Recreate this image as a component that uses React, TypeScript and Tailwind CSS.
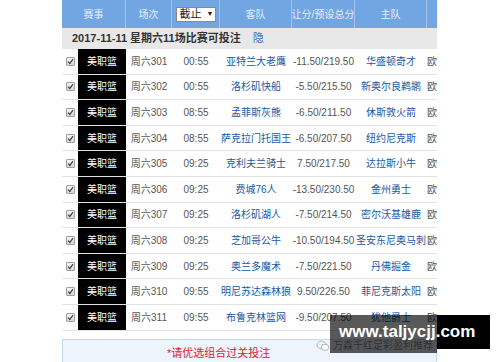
import React from "react";

const rows = [
  ["301", "00:55", "亚特兰大老鹰", "-11.50/219.50", "华盛顿奇才"],
  ["302", "00:55", "洛杉矶快船", "-5.50/215.50", "新奥尔良鹈鹕"],
  ["303", "08:55", "孟菲斯灰熊", "-6.50/211.50", "休斯敦火箭"],
  ["304", "08:55", "萨克拉门托国王", "-6.50/207.50", "纽约尼克斯"],
  ["305", "09:25", "克利夫兰骑士", "7.50/217.50", "达拉斯小牛"],
  ["306", "09:25", "费城76人", "-13.50/230.50", "金州勇士"],
  ["307", "09:25", "洛杉矶湖人", "-7.50/214.50", "密尔沃基雄鹿"],
  ["308", "09:25", "芝加哥公牛", "-10.50/194.50", "圣安东尼奥马刺"],
  ["309", "09:25", "奥兰多魔术", "-7.50/221.50", "丹佛掘金"],
  ["310", "09:55", "明尼苏达森林狼", "9.50/226.50", "菲尼克斯太阳"],
  ["311", "09:55", "布鲁克林篮网", "-9.50/207.50", "犹他爵士"],
];

const font = { fontFamily: '"Liberation Sans","Noto Sans CJK SC",sans-serif' };

function Check() {
  return (
    <span className="flex h-[9px] w-[9px] items-center justify-center rounded-[1px] border border-[#a0a0a0] bg-gradient-to-b from-[#f4f4f4] to-[#d8d8d8]">
      <svg width="7" height="7" viewBox="0 0 7 7">
        <path d="M1 3.6 L2.8 5.4 L6 1.2" stroke="#444" strokeWidth="1.3" fill="none" />
      </svg>
    </span>
  );
}

export default function App() {
  return (
    <div className="relative h-[362px] w-[500px] overflow-hidden bg-white" style={font}>
      <div className="ml-[62px] w-[375px]">
        {/* header */}
        <div className="grid h-[28px] grid-cols-[64px_46px_48px_72px_63px_72px_10px] bg-[#72a6e3] text-[10px] text-[#e4eefa]">
          <div className="flex items-center justify-center border-r border-[#a3c5ee]">赛事</div>
          <div className="flex items-center justify-center border-r border-[#a3c5ee]">场次</div>
          <div className="flex items-center justify-center border-r border-[#a3c5ee]">
            <span className="flex h-[15px] w-[40px] items-center gap-[5px] border border-[#8a8a8a] bg-white pl-[3px] text-[11px] text-[#222]">
              截止<span className="text-[7px]">▼</span>
            </span>
          </div>
          <div className="flex items-center justify-center border-r border-[#a3c5ee]">客队</div>
          <div className="flex items-center justify-center border-r border-[#a3c5ee] whitespace-nowrap">让分/预设总分</div>
          <div className="flex items-center justify-center border-r border-[#a3c5ee]">主队</div>
          <div />
        </div>
        {/* date row */}
        <div className="flex h-[21px] items-center bg-[#e8e8e8] pl-[10px] text-[11px] font-bold text-[#333]">
          <span>2017-11-11 星期六11场比赛可投注</span>
          <span className="ml-[12px] font-normal text-[#3b6fb6]">隐</span>
        </div>
        {/* rows */}
        {rows.map((r) => (
          <div
            key={r[0]}
            className="grid h-[25.6px] grid-cols-[16px_48px_46px_48px_72px_63px_72px_10px] border-b border-[#e2e2e2] text-[10px] text-[#555]"
          >
            <div className="flex items-center justify-center">
              <Check />
            </div>
            <div className="flex items-center justify-center bg-black text-white">美职篮</div>
            <div className="flex items-center justify-center">周六{r[0]}</div>
            <div className="flex items-center justify-center">{r[1]}</div>
            <div className="flex items-center justify-center whitespace-nowrap text-[#22579f]">{r[2]}</div>
            <div className="flex items-center justify-center whitespace-nowrap">{r[3]}</div>
            <div className="flex items-center justify-center whitespace-nowrap text-[#22579f]">{r[4]}</div>
            <div className="flex items-center whitespace-nowrap">欧</div>
          </div>
        ))}
        {/* bottom box */}
        <div className="mt-[8px] h-[40px] border border-[#c4d8ee] bg-[#eef4fb] pt-[5px]">
          <div className="pl-[104px] text-[11px] text-[#e0201c]">*请优选组合过关投注</div>
          <div className="ml-[15px] mt-[1px] h-[20px] w-[82px] border border-[#a9c1de] bg-white" />
        </div>
      </div>

      {/* watermark */}
      <div className="absolute left-[316px] top-[338px] flex items-center gap-[3px] text-[10px] text-[#8a8a8a]">
        <svg width="14" height="12" viewBox="0 0 14 12">
          <ellipse cx="5.5" cy="5" rx="4.5" ry="3.8" fill="none" stroke="#aaa" strokeWidth="0.9" />
          <ellipse cx="9" cy="7.3" rx="3.8" ry="3.1" fill="#fff" stroke="#aaa" strokeWidth="0.9" />
        </svg>
        <span>万森千红足彩盈利推荐</span>
      </div>
      <div className="absolute left-[330px] top-[315px] h-[38px] w-[107px] bg-black/65" />
      <div className="absolute left-[437px] top-[315px] h-[34px] w-[53px] bg-black" />
      <div className="absolute left-[339px] top-[323px] text-[17px] font-bold leading-none text-white">
        www.taljycjj.com
      </div>
    </div>
  );
}
